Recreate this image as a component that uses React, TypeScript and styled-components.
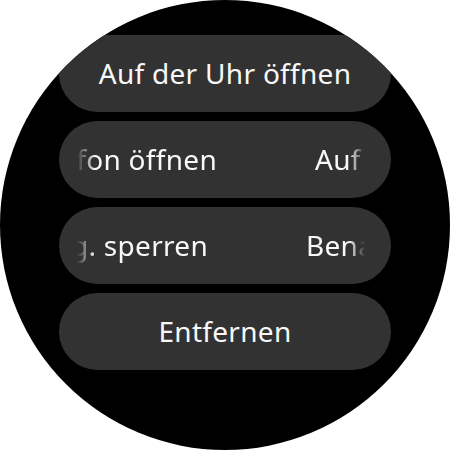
import React from "react";
import styled, { createGlobalStyle } from "styled-components";

const GlobalStyle = createGlobalStyle`
  html, body {
    margin: 0;
    padding: 0;
    background: #ffffff;
  }
  #root {
    width: 450px;
    height: 450px;
  }
`;

const Watch = styled.div`
  width: 450px;
  height: 450px;
  border-radius: 50%;
  background: #000000;
  overflow: hidden;
  display: flex;
  flex-direction: column;
  align-items: center;
  box-sizing: border-box;
  padding-top: 35px;
`;

const List = styled.div`
  width: 332px;
  display: flex;
  flex-direction: column;
  gap: 9px;
`;

const Pill = styled.div<{ $clippedTop?: boolean; $marquee?: boolean }>`
  height: 77px;
  border-radius: ${(p) => (p.$clippedTop ? "0 0 38.5px 38.5px" : "38.5px")};
  background: #323232;
  color: #f8f8f8;
  font-family: "Noto Sans", "Open Sans", sans-serif;
  font-size: 28px;
  letter-spacing: 0.3px;
  display: flex;
  align-items: center;
  justify-content: center;
  padding: ${(p) => (p.$marquee ? "0 26px 0 18px" : "0 24px")};
  box-sizing: border-box;
  white-space: nowrap;
`;

const Label = styled.span`
  line-height: 1;
  padding-bottom: 2px;
`;

const MarqueeViewport = styled.div`
  width: 100%;
  height: 100%;
  overflow: hidden;
  display: flex;
  align-items: center;
  -webkit-mask-image: linear-gradient(
    to right,
    transparent 0,
    #000 18px,
    #000 calc(100% - 16px),
    transparent 100%
  );
  mask-image: linear-gradient(
    to right,
    transparent 0,
    #000 18px,
    #000 calc(100% - 16px),
    transparent 100%
  );
`;

const MarqueeTrack = styled.div`
  display: flex;
  align-items: center;
  gap: 98px;
  flex: none;
`;

const Lead = styled.div<{ $end: number }>`
  width: ${(p) => p.$end}px;
  flex: none;
  display: flex;
  justify-content: flex-end;
`;

const Copy = styled.span`
  flex: none;
  line-height: 1;
  padding-bottom: 2px;
`;

function Marquee({ text, end }: { text: string; end: number }) {
  return (
    <MarqueeViewport>
      <MarqueeTrack>
        <Lead $end={end}>
          <Copy>{text}</Copy>
        </Lead>
        <Copy>{text}</Copy>
      </MarqueeTrack>
    </MarqueeViewport>
  );
}

export default function App() {
  return (
    <>
      <GlobalStyle />
      <Watch>
        <List>
          <Pill $clippedTop>
            <Label>Auf der Uhr öffnen</Label>
          </Pill>
          <Pill $marquee>
            <Marquee text="Auf dem Telefon öffnen" end={140} />
          </Pill>
          <Pill $marquee>
            <Marquee text="Benachrichtig. sperren" end={131} />
          </Pill>
          <Pill>
            <Label>Entfernen</Label>
          </Pill>
        </List>
      </Watch>
    </>
  );
}
